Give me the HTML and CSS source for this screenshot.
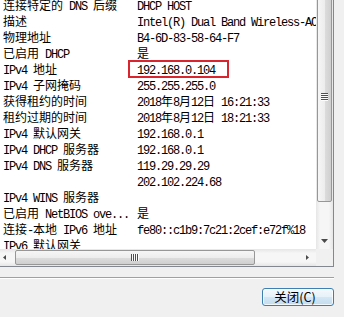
FILE: index.html
```html
<!DOCTYPE html>
<html lang="zh-CN">
<head>
<meta charset="utf-8">
<title>网络连接详细信息</title>
<link rel="stylesheet" href="styles.css">
</head>
<body>
<div class="dialog">
  <div class="listbox">
    <div class="main">
      <div class="view">
        <div class="rows">
          <div class="row"><span class="k">连接特定的<span class="a"> DNS </span>后缀</span><span class="v"><span class="a">DHCP HOST</span></span></div>
          <div class="row"><span class="k">描述</span><span class="v"><span class="a">Intel(R) Dual Band Wireless-AC 3165</span></span></div>
          <div class="row"><span class="k">物理地址</span><span class="v"><span class="a">B4-6D-83-58-64-F7</span></span></div>
          <div class="row"><span class="k">已启用<span class="a"> DHCP</span></span><span class="v">是</span></div>
          <div class="row"><span class="k"><span class="a">IPv4 </span>地址</span><span class="v"><span class="a">192.168.0.104</span></span></div>
          <div class="row"><span class="k"><span class="a">IPv4 </span>子网掩码</span><span class="v"><span class="a">255.255.255.0</span></span></div>
          <div class="row"><span class="k">获得租约的时间</span><span class="v"><span class="a">2018</span>年<span class="a">8</span>月<span class="a">12</span>日<span class="a"> 16:21:33</span></span></div>
          <div class="row"><span class="k">租约过期的时间</span><span class="v"><span class="a">2018</span>年<span class="a">8</span>月<span class="a">12</span>日<span class="a"> 18:21:33</span></span></div>
          <div class="row"><span class="k"><span class="a">IPv4 </span>默认网关</span><span class="v"><span class="a">192.168.0.1</span></span></div>
          <div class="row"><span class="k"><span class="a">IPv4 DHCP </span>服务器</span><span class="v"><span class="a">192.168.0.1</span></span></div>
          <div class="row"><span class="k"><span class="a">IPv4 DNS </span>服务器</span><span class="v"><span class="a">119.29.29.29</span></span></div>
          <div class="row"><span class="k"></span><span class="v"><span class="a">202.102.224.68</span></span></div>
          <div class="row"><span class="k"><span class="a">IPv4 WINS </span>服务器</span><span class="v"></span></div>
          <div class="row"><span class="k">已启用<span class="a"> NetBIOS ove...</span></span><span class="v">是</span></div>
          <div class="row"><span class="k">连接<span class="a">-</span>本地<span class="a"> IPv6 </span>地址</span><span class="v"><span class="a">fe80::c1b9:7c21:2cef:e72f%18</span></span></div>
          <div class="row"><span class="k"><span class="a">IPv6 </span>默认网关</span><span class="v"></span></div>
        </div>
        <div class="hl"></div>
      </div>
      <div class="vscroll">
        <div class="vthumb"><div class="vgrip"></div></div>
        <div class="vtrack"></div>
        <div class="vdown"><svg width="7" height="4" viewBox="0 0 7 4"><polygon points="0,0 7,0 3.5,4" fill="#4a4a4a"/></svg></div>
      </div>
    </div>
    <div class="hbar">
      <div class="hscroll">
        <div class="hleft"><svg width="3" height="5" viewBox="0 0 3 5"><polygon points="3,0 3,5 0,2.5" fill="#4a4a4a"/></svg></div>
        <div class="hthumb"><div class="hgrip"></div></div>
        <div class="htrack"></div>
        <div class="hright"><svg width="3" height="5" viewBox="0 0 3 5"><polygon points="0,0 0,5 3,2.5" fill="#4a4a4a"/></svg></div>
      </div>
      <div class="corner"></div>
    </div>
  </div>
  <div class="sep"></div>
  <div class="footer">
    <button class="btn">关闭(C)</button>
  </div>
</div>
</body>
</html>
```
FILE: styles.css
```css
html, body {
  margin: 0;
  padding: 0;
}
body {
  width: 344px;
  height: 317px;
  overflow: hidden;
  background: #f0f0f0;
  font: 12px/16px "Noto Sans CJK SC", sans-serif;
  color: #000;
}
.dialog {
  width: 334px;
}
.listbox {
  width: 334px;
  height: 267px;
  box-sizing: border-box;
  border-right: 1px solid #828790;
  border-bottom: 1px solid #828790;
  background: #fff;
  display: flex;
  flex-direction: column;
}
.main {
  display: flex;
  height: 249px;
  flex: none;
}
.view {
  position: relative;
  width: 316px;
  flex: none;
  overflow: hidden;
}
.rows {
  margin-top: -3px;
}
.row {
  display: flex;
  height: 16px;
  padding-left: 3px;
  white-space: pre;
}
.k {
  width: 134px;
  flex: none;
}
.v {
  flex: none;
}
.a {
  font-family: "Liberation Mono", monospace;
  letter-spacing: -1.2px;
}
.hl {
  position: absolute;
  left: 128px;
  top: 60px;
  width: 101px;
  height: 18px;
  box-sizing: border-box;
  border: 2px solid #d9252e;
}
.vscroll {
  width: 17px;
  flex: none;
  display: flex;
  flex-direction: column;
  overflow: hidden;
  background: linear-gradient(to right, #e6e6e6, #f6f6f6 25%, #f6f6f6 75%, #e6e6e6);
}
.vthumb {
  flex: none;
  margin: -9px 1px 0;
  height: 211px;
  box-sizing: border-box;
  border: 1px solid #979797;
  border-radius: 2px;
  background: linear-gradient(to right, #f6f6f6, #ededed 50%, #dddddd 51%, #cfcfcf);
  display: flex;
  align-items: center;
  justify-content: center;
}
.vgrip {
  width: 7px;
  height: 8px;
  background: repeating-linear-gradient(to bottom, #505050 0 1px, #fcfcfc 1px 2px);
}
.vtrack {
  flex: 1;
}
.vdown {
  height: 17px;
  flex: none;
  display: flex;
  align-items: center;
  justify-content: center;
}
.hbar {
  display: flex;
  height: 17px;
  flex: none;
}
.hscroll {
  width: 316px;
  flex: none;
  display: flex;
  background: linear-gradient(#e6e6e6, #f6f6f6 25%, #f6f6f6 75%, #e6e6e6);
}
.hleft {
  width: 15px;
  flex: none;
  box-sizing: border-box;
  padding-left: 3px;
  display: flex;
  align-items: center;
}
.hthumb {
  width: 240px;
  flex: none;
  margin: 1px 0;
  box-sizing: border-box;
  border: 1px solid #979797;
  border-radius: 2px;
  background: linear-gradient(#f6f6f6, #ededed 50%, #dddddd 51%, #cfcfcf);
  display: flex;
  align-items: center;
  justify-content: center;
}
.hgrip {
  width: 8px;
  height: 7px;
  background: repeating-linear-gradient(to right, #505050 0 1px, #fcfcfc 1px 2px);
}
.htrack {
  flex: 1;
}
.hright {
  width: 17px;
  flex: none;
  display: flex;
  align-items: center;
  justify-content: center;
}
.corner {
  width: 17px;
  flex: none;
  background: #f0f0f0;
}
.sep {
  margin-top: 10px;
  width: 334px;
  height: 1px;
  background: #a0a0a0;
  border-bottom: 1px solid #ffffff;
}
.footer {
  width: 334px;
  margin-top: 9px;
  display: flex;
  justify-content: flex-end;
}
.btn {
  width: 72px;
  height: 18px;
  padding: 0 6px 0 0;
  margin: 0;
  box-sizing: border-box;
  border: 1px solid #3c7fb1;
  border-radius: 3px;
  background: linear-gradient(#f4f9fd, #e6f1f9 48%, #d3e6f4 52%, #c3ddef);
  box-shadow: inset 0 0 0 1px rgba(255, 255, 255, 0.75);
  font: 12.5px/16px "Noto Sans CJK SC", sans-serif;
  color: #000;
  text-align: center;
}
```
